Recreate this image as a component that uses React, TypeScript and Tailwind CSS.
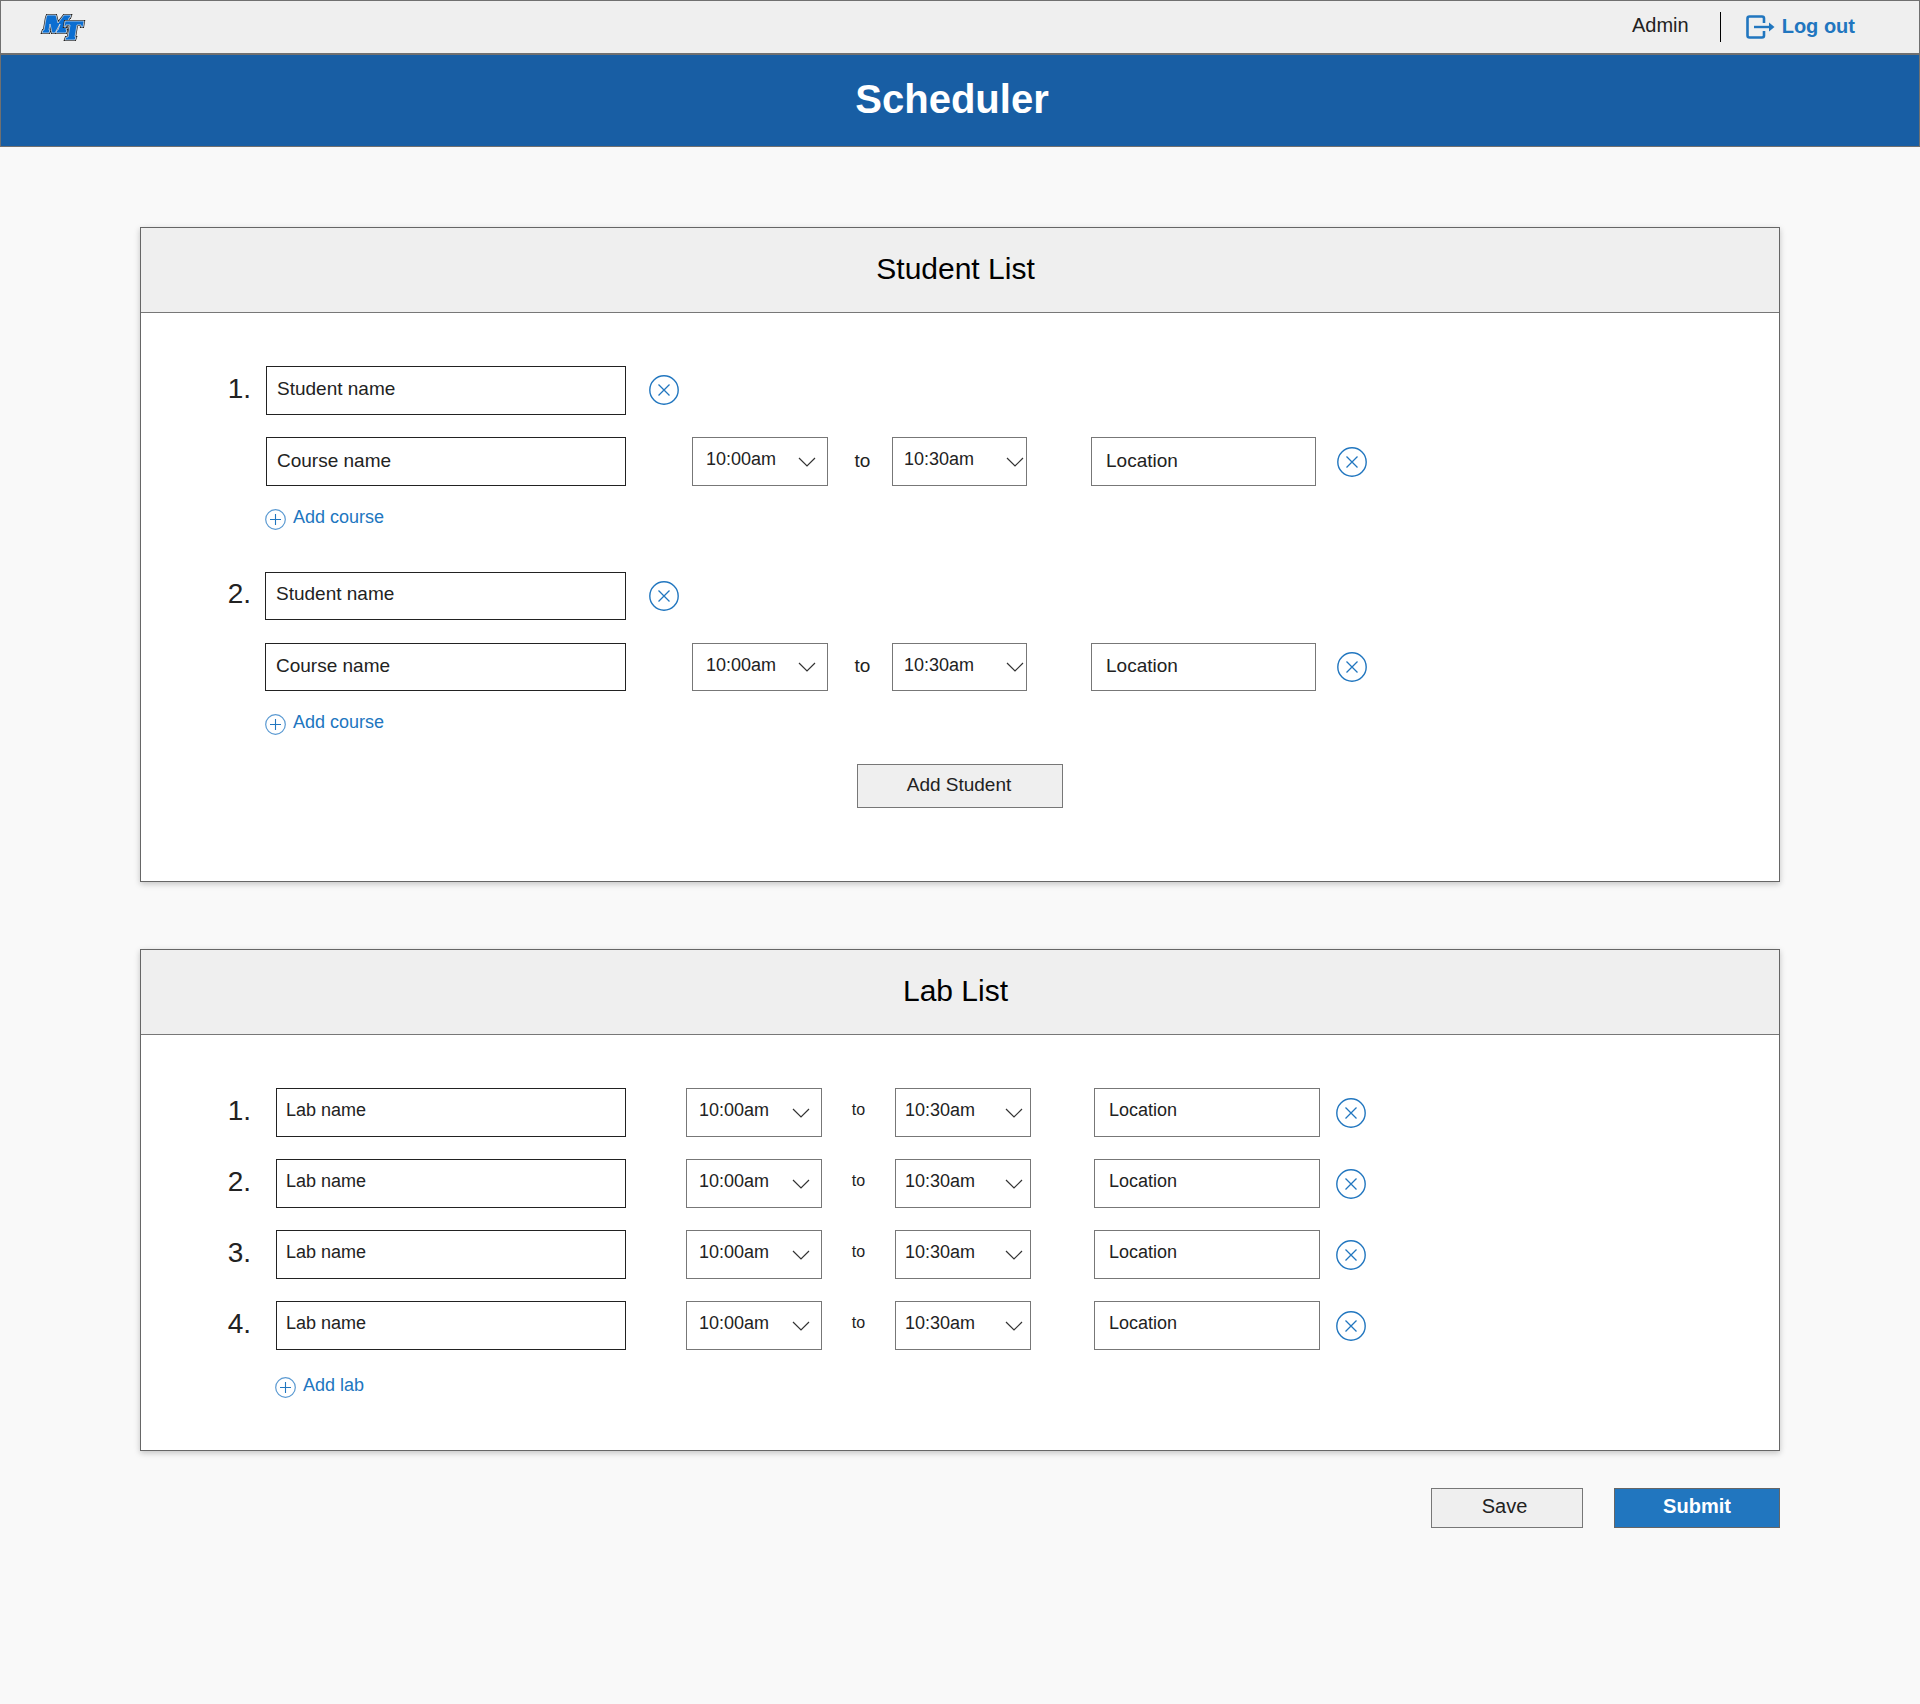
import React from 'react'

const font = "font-['Liberation_Sans',Arial,sans-serif]"

// ── Icons ────────────────────────────────────────────────────────────────────
function Logo() {
  const m = '47,15 56,15 58,23 64,15 71,15 70,18 69,18 66,30 67,30 66,33 56,33 57,30 58,30 60,24 55,33 52,33 50,24 49,30 50,30 49,33 42,33 43,30 44,30 46,18'
  const t = '65,21 84,21 83,27 81,27 81,25 77,25 75,37 76,37 75,40 65,40 66,37 68,37 70,25 66,25 66,27 64,27'
  return (
    <svg width="50" height="32" viewBox="38 11 50 32" className="shrink-0">
      {[m, t].map((p) => (
        <g key={p} strokeLinejoin="miter">
          <polygon points={p} fill="#111" stroke="#222" strokeWidth="2.2" />
          <polygon points={p} fill="#0b6ed1" stroke="#e8eef5" strokeWidth="0.7" />
        </g>
      ))}
    </svg>
  )
}

function LogoutIcon() {
  return (
    <svg width="29" height="24" viewBox="0 0 29 24" fill="none" className="shrink-0">
      <path d="M18 8V3.5C18 2.4 17.1 1.5 16 1.5H3.5C2.4 1.5 1.5 2.4 1.5 3.5V20.5C1.5 21.6 2.4 22.5 3.5 22.5H16C17.1 22.5 18 21.6 18 20.5V16" stroke="#2176bf" strokeWidth="2.6" />
      <path d="M8 12H24" stroke="#2176bf" strokeWidth="2.4" />
      <path d="M23 7.5L28.5 12L23 16.5Z" fill="#2176bf" />
    </svg>
  )
}

function RemoveIcon() {
  return (
    <svg width="30" height="30" viewBox="0 0 30 30" fill="none" className="shrink-0">
      <circle cx="15" cy="15" r="14.2" stroke="#2176bf" strokeWidth="1.4" />
      <path d="M9.5 9.5L20.5 20.5M20.5 9.5L9.5 20.5" stroke="#2176bf" strokeWidth="1.3" />
    </svg>
  )
}

function PlusIcon() {
  return (
    <svg width="21" height="21" viewBox="0 0 21 21" fill="none" className="shrink-0 mt-[2px]">
      <circle cx="10.5" cy="10.5" r="9.8" stroke="#5b9ad2" strokeWidth="1.2" />
      <path d="M10.5 5V16M5 10.5H16" stroke="#2176bf" strokeWidth="1.1" />
    </svg>
  )
}

function Chevron() {
  return (
    <svg width="18" height="10" viewBox="0 0 18 10" fill="none" className="shrink-0">
      <path d="M1 1L9 9L17 1" stroke="#333" strokeWidth="1.2" />
    </svg>
  )
}

// ── Form bits ────────────────────────────────────────────────────────────────
function NameField({ label, className }: { label: string; className: string }) {
  return (
    <div className={`flex items-center bg-white border border-[#222] text-[#222] ${className}`}>
      {label}
    </div>
  )
}

function TimeSelect({ value, className }: { value: string; className: string }) {
  return (
    <div className={`flex items-center justify-between bg-white border border-[#777] text-[18px] text-[#222] ${className}`}>
      <span className="pb-[4px]">{value}</span>
      <Chevron />
    </div>
  )
}

function Location({ className }: { className: string }) {
  return (
    <div className={`flex items-center bg-white border border-[#777] text-[#222] ${className}`}>
      Location
    </div>
  )
}

function AddLink({ label, className }: { label: string; className: string }) {
  return (
    <div className={`flex items-start gap-[7px] h-[24px] text-[18px] leading-[20px] text-[#2176bf] ${className}`}>
      <PlusIcon />
      <span>{label}</span>
    </div>
  )
}

function Panel({ title, children }: { title: string; children: React.ReactNode }) {
  return (
    <section className="w-[1640px] mx-auto bg-white border border-[#666] shadow-[0_2px_6px_rgba(0,0,0,0.22)]">
      <div className="flex items-center justify-center h-[85px] pr-[9px] pb-[4px] bg-[#efefef] border-b border-[#777] text-[30px] text-black">
        <h2>{title}</h2>
      </div>
      {children}
    </section>
  )
}

// ── Student block ────────────────────────────────────────────────────────────
function StudentBlock({ n, second }: { n: number; second?: boolean }) {
  const h = second ? 'h-[48px]' : 'h-[49px]'
  return (
    <div>
      <div className="flex items-center">
        <div className={`text-right text-[28px] text-[#222] pb-[4px] ${second ? 'w-[124px] pr-[14px]' : 'w-[125px] pr-[15px]'}`}>{n}.</div>
        <NameField label="Student name" className={`${second ? 'w-[361px]' : 'w-[360px]'} ${h} pl-[10px] pb-[3px] text-[19px]`} />
        <div className={`ml-[23px] ${second ? '' : 'mb-[1px]'}`}><RemoveIcon /></div>
      </div>
      <div className={`flex items-center ${second ? 'mt-[23px]' : 'mt-[22px]'}`}>
        <div className={second ? 'w-[124px]' : 'w-[125px]'} />
        <NameField label="Course name" className={`${second ? 'w-[361px]' : 'w-[360px]'} ${h} pl-[10px] ${second ? 'pb-[1px]' : ''} text-[19px]`} />
        <TimeSelect value="10:00am" className={`w-[136px] ml-[66px] ${h} pl-[13px] pr-[11px]`} />
        <div className={`w-[64px] text-center text-[19px] text-[#222] pl-[5px] ${second ? 'pb-[1px]' : ''}`}>to</div>
        <TimeSelect value="10:30am" className={`w-[135px] ${h} pl-[11px] pr-[2px]`} />
        <Location className={`w-[225px] ml-[64px] ${h} pl-[14px] ${second ? 'pb-[1px]' : ''} text-[19px]`} />
        <div className="ml-[21px]"><RemoveIcon /></div>
      </div>
      <AddLink label="Add course" className="mt-[21px] ml-[124px]" />
    </div>
  )
}

// ── Lab row ──────────────────────────────────────────────────────────────────
function LabRow({ n }: { n: number }) {
  return (
    <div className="flex items-center h-[49px]">
      <div className="w-[135px] pr-[25px] pb-[4px] text-right text-[28px] text-[#222]">{n}.</div>
      <NameField label="Lab name" className="w-[350px] h-[49px] pl-[9px] pb-[4px] text-[18px]" />
      <TimeSelect value="10:00am" className="w-[136px] ml-[60px] h-[49px] pl-[12px] pr-[11px]" />
      <div className="w-[73px] text-center text-[16px] text-[#222] pb-[5px]">to</div>
      <TimeSelect value="10:30am" className="w-[136px] h-[49px] pl-[9px] pr-[7px]" />
      <Location className="w-[226px] ml-[63px] h-[49px] pl-[14px] pb-[4px] text-[18px]" />
      <div className="ml-[16px]"><RemoveIcon /></div>
    </div>
  )
}

// ── MAIN ─────────────────────────────────────────────────────────────────────
export default function App() {
  return (
    <div className={`${font} min-h-[1704px] bg-[#f9f9f9] text-[#222]`}>
      {/* Top bar */}
      <header className="flex items-center justify-between h-[55px] pl-[37px] pr-[64px] bg-[#efefef] border border-b-2 border-[#707070]">
        <Logo />
        <div className="flex items-center text-[20px]">
          <span className="pb-[5px]">Admin</span>
          <div className="w-px h-[30px] bg-black ml-[31px] mr-[25px]" />
          <LogoutIcon />
          <span className="ml-[7px] pb-[3px] font-bold text-[#2176bf]">Log out</span>
        </div>
      </header>

      {/* Title band */}
      <div className="flex items-center justify-center h-[92px] pr-[16px] pb-[4px] bg-[#185ea4] border-x border-b border-[#707070] text-[40px] font-bold text-white">
        Scheduler
      </div>

      <main className="pt-[80px]">
        <Panel title="Student List">
          <div className="pt-[53px] pb-[73px]">
            <StudentBlock n={1} />
            <div className="mt-[41px]">
              <StudentBlock n={2} second />
            </div>
            <div className="flex justify-center mt-[28px]">
              <button className="w-[206px] h-[44px] pb-[2px] pr-[2px] bg-[#efefef] border border-[#777] text-[19px] text-[#222]">
                Add Student
              </button>
            </div>
          </div>
        </Panel>

        <div className="mt-[67px]">
          <Panel title="Lab List">
            <div className="pt-[53px] pb-[51px]">
              <div className="flex flex-col gap-[22px]">
                {[1, 2, 3, 4].map((n) => (
                  <LabRow key={n} n={n} />
                ))}
              </div>
              <AddLink label="Add lab" className="mt-[25px] ml-[134px]" />
            </div>
          </Panel>
        </div>

        {/* Actions */}
        <div className="flex justify-end gap-[31px] w-[1640px] mx-auto mt-[37px]">
          <button className="w-[152px] h-[40px] pb-[4px] pr-[5px] bg-[#efefef] border border-[#777] text-[20px] text-[#222]">
            Save
          </button>
          <button className="w-[166px] h-[40px] pb-[4px] bg-[#2176bf] border border-[#666] text-[20px] font-bold text-white">
            Submit
          </button>
        </div>
      </main>
    </div>
  )
}
